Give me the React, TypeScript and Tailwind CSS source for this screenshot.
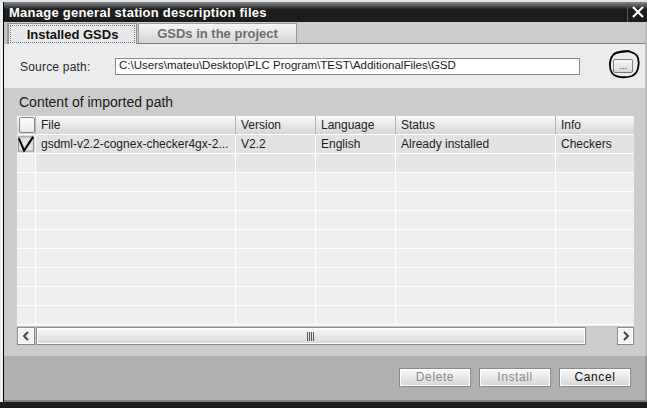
import React from "react";

const FONT = { fontFamily: '"Liberation Sans", Arial, sans-serif' };

const COLS = "grid grid-cols-[19px_200px_80px_80px_160px_78px]";

function HeaderCell({ children, last }: { children?: React.ReactNode; last?: boolean }) {
  return (
    <div
      className={
        "h-[19px] flex items-center pl-[5px] text-[12px] text-[#222] bg-[linear-gradient(#fafafa,#e6e6e6_55%,#d6d6d6)] border-b border-white " +
        (last ? "" : "border-r border-r-[#b4b4b4]")
      }
    >
      {children}
    </div>
  );
}

function Cell({ children, bg, last }: { children?: React.ReactNode; bg: string; last?: boolean }) {
  return (
    <div
      className={
        "h-[19px] flex items-center pl-[5px] text-[12px] text-[#1e1e1e] whitespace-nowrap overflow-hidden border-b border-white " +
        (last ? "" : "border-r border-r-white ") +
        bg
      }
    >
      {children}
    </div>
  );
}

function FooterButton({ label, enabled }: { label: string; enabled?: boolean }) {
  return (
    <div
      className={
        "w-[72px] h-[19px] flex items-center justify-center border border-[#8a8a8a] bg-[linear-gradient(#fbfbfb,#e4e4e4_60%,#d6d6d6)] text-[12px] tracking-[0.6px] shadow-[inset_0_0_0_1px_#ffffff] " +
        (enabled ? "text-[#111]" : "text-[#8c8c8c]")
      }
    >
      {label}
    </div>
  );
}

export default function App() {
  const emptyRows = Array.from({ length: 9 });
  return (
    <div className="w-[647px] h-[408px] overflow-hidden flex flex-col bg-[#1c1c1c]" style={FONT}>
      <div className="h-[2px] bg-[#dfe5ef] shrink-0" />
      <div className="flex flex-1 min-h-0">
        <div className="w-[3px] bg-[#eeeeee] shrink-0" />
        <div className="flex-1 flex flex-col border-l border-black min-w-0">
          {/* Title bar */}
          <div className="h-[20px] shrink-0 flex items-stretch bg-[linear-gradient(#8a8a8a,#1c1c1c_38%)]">
            <div className="flex-1 flex items-center pl-[5px] pt-[2px] text-white font-bold text-[13px] tracking-[0.25px]">
              Manage general station description files
            </div>
            <div className="w-[20px] border-l border-[#5a5a5a] flex items-center justify-center">
              <svg width="12" height="12" viewBox="0 0 12 12">
                <path d="M1 1 L11 11 M11 1 L1 11" stroke="#fff" strokeWidth="2.2" />
              </svg>
            </div>
          </div>

          {/* Tabs */}
          <div className="h-[22px] shrink-0 flex items-end bg-[#cccccc] border-r-2 border-[#bdbdbd]">
            <div className="w-[4px] h-[21px] bg-[#c2c2c2] border-r border-[#9a9a9a]" />
            <div className="w-[129px] h-[21px] bg-[#e8e8e8] border border-b-0 border-[#8f8f8f] p-[1px]">
              <div className="w-full h-full border border-dotted border-[#6f78a8] flex items-center justify-center font-bold text-[13px] text-[#111] pt-[1px]">
                Installed GSDs
              </div>
            </div>
            <div className="flex-1 flex items-end h-[21px] border-b border-[#7c7c7c]">
              <div className="ml-[1px] w-[159px] h-[20px] bg-[linear-gradient(#f6f6f6,#e2e2e2_60%,#d4d4d4)] border border-[#9a9a9a] border-b-0 flex items-center justify-center font-bold text-[13px] text-[#6e6e6e]">
                GSDs in the project
              </div>
            </div>
          </div>

          {/* Source path */}
          <div className="h-[44px] shrink-0 bg-[#ececec] flex items-center pl-[16px] pr-[12px] border-r-2 border-[#bdbdbd] relative">
            <div className="w-[95px] text-[12px] text-[#2a2a2a] tracking-[0.2px] pt-[1px]">Source path:</div>
            <div className="w-[465px] h-[17px] bg-white border border-[#8a8a8a] flex items-center pl-[3px] text-[11.5px] text-[#1a1a1a] whitespace-nowrap overflow-hidden">
              C:\Users\mateu\Desktop\PLC Program\TEST\AdditionalFiles\GSD
            </div>
            <div className="flex-1" />
            <div className="w-[20px] h-[14px] border border-[#7a7a7a] rounded-[2px] bg-[linear-gradient(#fafafa,#d8d8d8)] flex items-end justify-center text-[9px] leading-[9px] text-[#333] pb-[1px]">
              ...
            </div>
            <svg className="absolute left-[603px] top-[5px]" width="34" height="30" viewBox="0 0 34 30">
              <path
                d="M12 3 C20 1 29 3 31 9 C33 16 31 24 25 27 C18 29 9 29 5 24 C2 19 2 11 6 6 C8 4 11 3 14 3 L22 2"
                fill="none"
                stroke="#000"
                strokeWidth="1.8"
                strokeLinecap="round"
              />
            </svg>
          </div>

          {/* Section */}
          <div className="h-[268px] shrink-0 bg-[#cccccc] flex flex-col pl-[13px] pr-[11px] border-r-2 border-[#bdbdbd]">
            <div className="h-[28px] flex items-center pl-[2px] text-[14px] text-[#1a1a1a]">Content of imported path</div>
            <div className="h-[229px] flex flex-col bg-[#efefef] overflow-hidden">
              <div className={COLS}>
                <HeaderCell>
                  <div className="-ml-[3px] w-[16px] h-[16px] border border-[#8a8a8a] rounded-[2px] bg-[linear-gradient(#fdfdfd,#e8e8e8)]" />
                </HeaderCell>
                <HeaderCell>File</HeaderCell>
                <HeaderCell>Version</HeaderCell>
                <HeaderCell>Language</HeaderCell>
                <HeaderCell>Status</HeaderCell>
                <HeaderCell last>Info</HeaderCell>
              </div>
              <div className={COLS}>
                <Cell bg="bg-[#e2e2e2]">
                  <svg className="-ml-[5px]" width="19" height="18" viewBox="0 0 19 18">
                    <rect x="1.5" y="1.5" width="16" height="15" fill="none" stroke="#8a8a8a" />
                    <path d="M2 3 L7.5 16 L17 1.5" fill="none" stroke="#000" strokeWidth="2.2" strokeLinejoin="miter" />
                  </svg>
                </Cell>
                <Cell bg="bg-[#e2e2e2]">gsdml-v2.2-cognex-checker4gx-2...</Cell>
                <Cell bg="bg-[#e2e2e2]">V2.2</Cell>
                <Cell bg="bg-[#e2e2e2]">English</Cell>
                <Cell bg="bg-[#e2e2e2]">Already installed</Cell>
                <Cell bg="bg-[#e2e2e2]" last>Checkers</Cell>
              </div>
              {emptyRows.map((_, i) => (
                <div className={COLS} key={i}>
                  <Cell bg="bg-[#efefef]" />
                  <Cell bg={i === 0 ? "bg-[#e6e6e6]" : "bg-[#efefef]"} />
                  <Cell bg={i === 0 ? "bg-[#e6e6e6]" : "bg-[#efefef]"} />
                  <Cell bg={i === 0 ? "bg-[#e6e6e6]" : "bg-[#efefef]"} />
                  <Cell bg={i === 0 ? "bg-[#e6e6e6]" : "bg-[#efefef]"} />
                  <Cell bg={i === 0 ? "bg-[#e6e6e6]" : "bg-[#efefef]"} last />
                </div>
              ))}
              <div className="flex-1" />
              {/* Horizontal scrollbar */}
              <div className="h-[19px] shrink-0 flex items-stretch bg-[#cccccc] pt-[1px]">
                <div className="w-[18px] border border-[#8a8a8a] bg-[#f2f2f2] shadow-[inset_0_0_0_1px_#ffffff] flex items-center justify-center">
                  <svg width="8" height="10" viewBox="0 0 8 10">
                    <path d="M6 1 L2 5 L6 9" fill="none" stroke="#444" strokeWidth="2" />
                  </svg>
                </div>
                <div className="w-[1px]" />
                <div className="w-[550px] border border-[#8a8a8a] bg-[linear-gradient(#fafafa,#e6e6e6_55%,#d8d8d8)] shadow-[inset_0_0_0_1px_#ffffff] flex items-center justify-center">
                  <svg width="8" height="9" viewBox="0 0 8 9">
                    <path d="M0.5 0 V9 M2.5 0 V9 M4.5 0 V9 M6.5 0 V9" stroke="#555" strokeWidth="1" />
                  </svg>
                </div>
                <div className="flex-1" />
                <div className="w-[17px] border border-[#8a8a8a] bg-[#f2f2f2] shadow-[inset_0_0_0_1px_#ffffff] flex items-center justify-center">
                  <svg width="8" height="10" viewBox="0 0 8 10">
                    <path d="M2 1 L6 5 L2 9" fill="none" stroke="#444" strokeWidth="2" />
                  </svg>
                </div>
              </div>
            </div>
          </div>

          {/* Footer */}
          <div className="h-[44px] shrink-0 bg-[#b0b0b0] flex items-center justify-end gap-[8px] pr-[14px] pb-[2px] border-r-2 border-[#9c9c9c]">
            <FooterButton label="Delete" />
            <FooterButton label="Install" />
            <FooterButton label="Cancel" enabled />
          </div>
          <div className="h-[2px] shrink-0 bg-[#808080]" />
        </div>
      </div>
      <div className="h-[6px] shrink-0 bg-[#1c1c1c]" />
    </div>
  );
}
